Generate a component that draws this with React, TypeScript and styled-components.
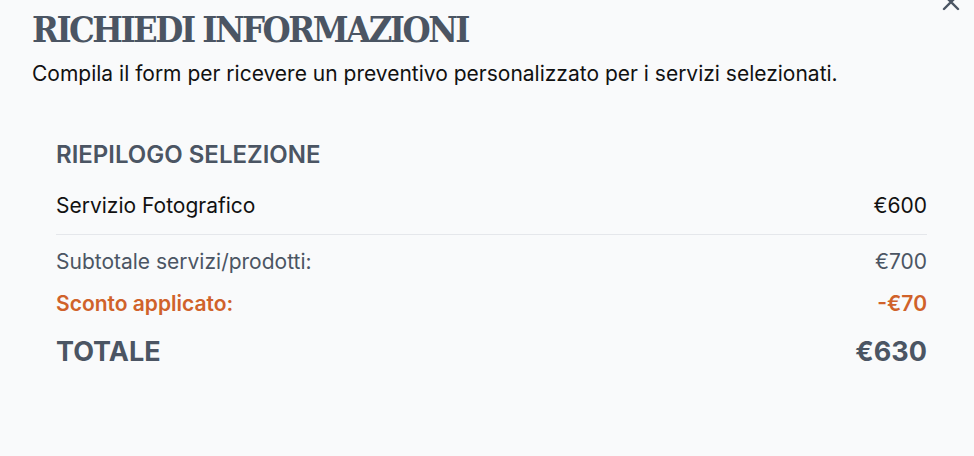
import React from "react";
import styled, { createGlobalStyle } from "styled-components";

const Global = createGlobalStyle`
  html, body { margin: 0; padding: 0; background: #f9fafb; }
  body { font-family: Inter, "Noto Sans", sans-serif; }
`;

const Modal = styled.div`
  position: relative;
  width: 974px;
  height: 456px;
  box-sizing: border-box;
  padding: 8px 23px 0 32px;
  background: #f9fafb;
  overflow: hidden;
`;

const Close = styled.button`
  position: absolute;
  top: -12px;
  right: 9px;
  width: 28px;
  height: 28px;
  padding: 0;
  border: 0;
  background: transparent;
  color: #4b5563;
  display: flex;
`;

const Title = styled.h1`
  margin: 0;
  font-family: "DejaVu Serif Condensed", "DejaVu Serif", serif;
  font-stretch: condensed;
  font-weight: 700;
  font-size: 36px;
  line-height: 42px;
  letter-spacing: -2.5px;
  color: #4b5563;
`;

const Lead = styled.p`
  margin: 9px 0 0;
  font-size: 21px;
  line-height: 30px;
  color: #111111;
`;

const Summary = styled.section`
  margin-top: 50px;
  padding: 0 24px;
  display: flex;
  flex-direction: column;
`;

const SummaryTitle = styled.h2`
  margin: 0 0 20px;
  font-size: 24px;
  line-height: 32px;
  font-weight: 600;
  color: #4b5563;
`;

const Row = styled.div<{ $tone?: "main" | "muted" | "accent" | "total" }>`
  display: flex;
  justify-content: space-between;
  align-items: center;
  font-size: ${(p) => (p.$tone === "total" ? "27px" : "21px")};
  line-height: ${(p) => (p.$tone === "total" ? "36px" : "30px")};
  font-weight: ${(p) =>
    p.$tone === "total" ? 700 : p.$tone === "accent" ? 600 : 400};
  color: ${(p) =>
    p.$tone === "muted"
      ? "#4b5563"
      : p.$tone === "accent"
      ? "#d0622a"
      : p.$tone === "total"
      ? "#4b5563"
      : "#111111"};
  margin-top: ${(p) => (p.$tone === "accent" ? "12px" : p.$tone === "total" ? "15px" : "0")};
`;

const Divider = styled.hr`
  margin: 13px 0 12px;
  border: 0;
  border-top: 1px solid #e5e7eb;
`;

export default function App() {
  return (
    <>
      <Global />
      <Modal>
        <Close aria-label="Chiudi">
          <svg width="28" height="28" viewBox="0 0 24 24" fill="none" stroke="currentColor" strokeWidth="2.1" strokeLinecap="round">
            <path d="M18 6 6 18M6 6l12 12" />
          </svg>
        </Close>
        <Title>RICHIEDI INFORMAZIONI</Title>
        <Lead>Compila il form per ricevere un preventivo personalizzato per i servizi selezionati.</Lead>
        <Summary>
          <SummaryTitle>RIEPILOGO SELEZIONE</SummaryTitle>
          <Row $tone="main">
            <span>Servizio Fotografico</span>
            <span>€600</span>
          </Row>
          <Divider />
          <Row $tone="muted">
            <span>Subtotale servizi/prodotti:</span>
            <span>€700</span>
          </Row>
          <Row $tone="accent">
            <span>Sconto applicato:</span>
            <span>-€70</span>
          </Row>
          <Row $tone="total">
            <span>TOTALE</span>
            <span>€630</span>
          </Row>
        </Summary>
      </Modal>
    </>
  );
}
